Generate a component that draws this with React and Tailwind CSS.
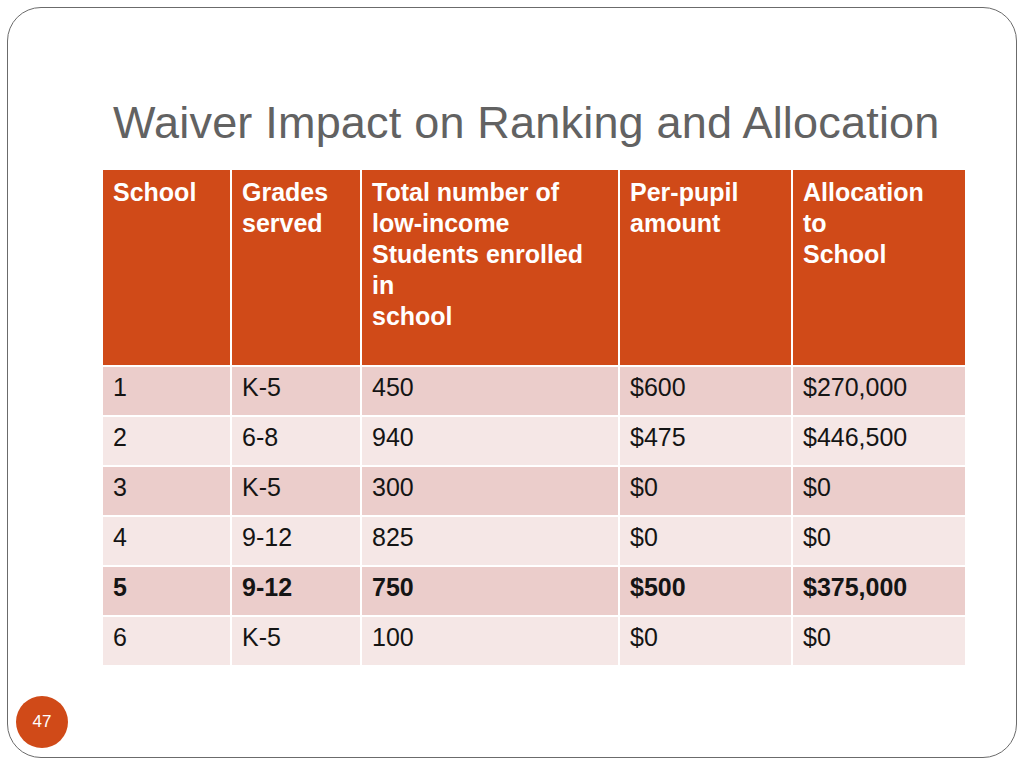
import React from 'react'

const head = [
    ['School'],
    ['Grades', 'served'],
    ['Total number of', 'low-income', 'Students enrolled', 'in', 'school'],
    ['Per-pupil', 'amount'],
    ['Allocation', 'to', 'School'],
]

const rows = [
    ['1', 'K-5', '450', '$600', '$270,000'],
    ['2', '6-8', '940', '$475', '$446,500'],
    ['3', 'K-5', '300', '$0', '$0'],
    ['4', '9-12', '825', '$0', '$0'],
    ['5', '9-12', '750', '$500', '$375,000', true],
    ['6', 'K-5', '100', '$0', '$0'],
]

function App() {
    return (
        <div className='w-[1024px] h-[768px] bg-white pt-[7px] pl-[7px] font-["Liberation_Sans",Arial,sans-serif]'>
            <div className='relative w-[1010px] h-[751px] border border-[#6b6b6b] rounded-[34px]'>
                <h1 className='mt-[92px] ml-[105px] text-[45px] leading-none tracking-[0.2px] text-[#626262] font-normal'>
                    Waiver Impact on Ranking and Allocation
                </h1>

                <div className='mt-[25px] ml-[95px] w-[862px] grid grid-cols-[127px_128px_256px_171px_172px] gap-[2px] bg-white text-[25px] leading-[31px]'>
                    {head.map((lines, i) => (
                        <div key={i} className='h-[195px] bg-[#d04a18] text-white font-bold pl-[10px] pt-[7px]'>
                            {lines.map((l, j) => (
                                <div key={j}>{l}</div>
                            ))}
                        </div>
                    ))}
                    {rows.map((r, i) => {
                        const bg = i % 2 === 0 ? 'bg-[#ebcdcb]' : 'bg-[#f5e7e6]'
                        const bold = r[5] ? 'font-bold' : 'font-normal'
                        return r.slice(0, 5).map((c, j) => (
                            <div key={i + '-' + j} className={`h-[48px] ${bg} ${bold} text-[#141414] pl-[10px] pt-[5px]`}>
                                {c}
                            </div>
                        ))
                    })}
                </div>

                <div className='absolute left-[8px] bottom-[9px] w-[52px] h-[52px] rounded-full bg-[#d04a18] flex items-center justify-center text-white text-[17px]'>
                    47
                </div>
            </div>
        </div>
    )
}

export default App
